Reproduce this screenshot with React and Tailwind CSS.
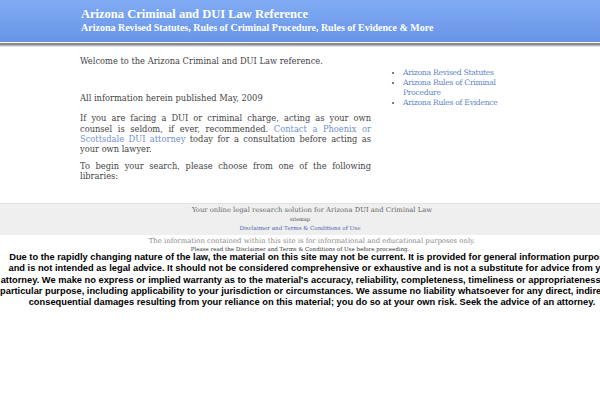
const disclaimerLines = [
  'Due to the rapidly changing nature of the law, the material on this site may not be current. It is provided for general information purposes',
  'and is not intended as legal advice. It should not be considered comprehensive or exhaustive and is not a substitute for advice from your',
  "attorney. We make no express or implied warranty as to the material's accuracy, reliability, completeness, timeliness or appropriateness for a",
  'particular purpose, including applicability to your jurisdiction or circumstances. We assume no liability whatsoever for any direct, indirect, or',
  'consequential damages resulting from your reliance on this material; you do so at your own risk. Seek the advice of an attorney.',
];

export default function App() {
  return (
    <div className="w-[600px] h-[400px] overflow-hidden bg-white">
      <div className="h-[42px] bg-gradient-to-b from-[#80acf4] to-[#6894e6]">
        <div className="pl-[81px] pt-[7px] text-white font-bold font-['Liberation_Serif',serif]">
          <div className="text-[12.5px] leading-[15px]">Arizona Criminal and DUI Law Reference</div>
          <div className="text-[10px] leading-[12px]">Arizona Revised Statutes, Rules of Criminal Procedure, Rules of Evidence &amp; More</div>
        </div>
      </div>
      <div className="h-px bg-white" />
      <div className="h-[2px] bg-[#8c8c8c]" />
      <div className="h-px bg-[#b8b8b8]" />
      <div className="h-px bg-[#e4e4e4]" />

      <div className="w-[440px] mx-auto flex pt-[9px] text-[#444] text-[8.3px] leading-[10.2px] font-['DejaVu_Serif',serif]">
        <div className="w-[291px] text-justify">
          <p>Welcome to the Arizona Criminal and DUI Law reference.</p>
          <p className="mt-[27px]">All information herein published May, 2009</p>
          <p className="mt-[10px]">If you are facing a DUI or criminal charge, acting as your own counsel is seldom, if ever, recommended. <span className="text-[#6f8fd0]">Contact a Phoenix or Scottsdale DUI attorney</span> today for a consultation before acting as your own lawyer.</p>
          <p className="mt-[7px]">To begin your search, please choose from one of the following libraries:</p>
        </div>
        <ul className="ml-[24px] mt-[12px] w-[106px] text-[7.6px] tracking-[-0.25px] leading-[10px] text-[#5e7fc4] list-disc marker:text-[#3a4f8a] pl-[8px]">
          <li>Arizona Revised Statutes</li>
          <li>Arizona Rules of Criminal Procedure</li>
          <li>Arizona Rules of Evidence</li>
        </ul>
      </div>

      <div className="mt-[21px] bg-[#efefef] border-t border-[#e2e2e2] pt-[1px] pb-[2px] text-center font-['DejaVu_Serif',serif]">
        <div className="pl-[24px] text-[6.8px] leading-[10px] text-[#666]">Your online legal research solution for Arizona DUI and Criminal Law</div>
        <div className="text-[5px] leading-[9px] text-[#444]">sitemap</div>
        <div className="text-[5.6px] leading-[9px] text-[#4a62a8]">Disclaimer and Terms &amp; Conditions of Use</div>
      </div>
      <div className="text-center font-['DejaVu_Serif',serif]">
        <div className="pl-[24px] text-[6.9px] leading-[10px] text-[#888] pt-[1.5px]">The information contained within this site is for informational and educational purposes only.</div>
        <div className="text-[5.5px] leading-[6px] text-[#333]">Please read the Disclaimer and Terms &amp; Conditions of Use before proceeding.</div>
      </div>
      <div className="w-[700px] -ml-[38px] text-center font-bold text-black text-[9.3px] leading-[11.3px] font-['Liberation_Sans',Arial,sans-serif]">
        {disclaimerLines.map((line) => (
          <div key={line} className="whitespace-nowrap">{line}</div>
        ))}
      </div>
    </div>
  );
}
